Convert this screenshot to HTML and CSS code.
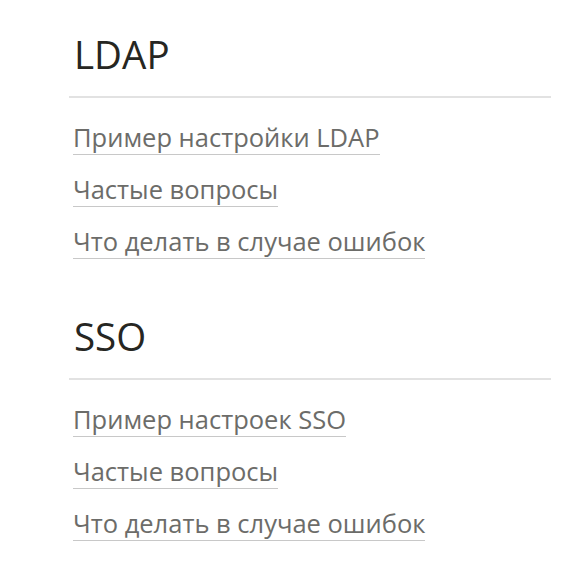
FILE: index.html
```html
<!DOCTYPE html>
<html lang="ru">
<head>
<meta charset="utf-8">
<link rel="stylesheet" href="styles.css">
</head>
<body>
<div class="page">
  <section class="group">
    <h2 class="title">LDAP</h2>
    <ul class="links">
      <li><a href="#">Пример настройки LDAP</a></li>
      <li><a href="#">Частые вопросы</a></li>
      <li><a href="#">Что делать в случае ошибок</a></li>
    </ul>
  </section>
  <section class="group">
    <h2 class="title">SSO</h2>
    <ul class="links">
      <li><a href="#">Пример настроек SSO</a></li>
      <li><a href="#">Частые вопросы</a></li>
      <li><a href="#">Что делать в случае ошибок</a></li>
    </ul>
  </section>
</div>
</body>
</html>
```

FILE: styles.css
```css
html, body {
  margin: 0;
  padding: 0;
  background: #ffffff;
}
.page {
  width: 482px;
  margin-left: 69px;
  padding-top: 24px;
  font-family: "Open Sans", "Noto Sans", sans-serif;
}
.group {
  margin-bottom: 49px;
}
.title {
  margin: 0;
  padding: 0 0 12px 5px;
  font-size: 38.5px;
  font-weight: 500;
  line-height: 60px;
  color: #262622;
  border-bottom: 2px solid #e2e2e2;
}
.links {
  list-style: none;
  margin: 0;
  padding: 23px 0 0 4px;
  display: flex;
  flex-direction: column;
  gap: 20px;
}
.links li {
  font-size: 25.5px;
  line-height: 32px;
}
.links a {
  color: #6c6c69;
  text-decoration: none;
  border-bottom: 1px solid #c8c8c8;
}
```
